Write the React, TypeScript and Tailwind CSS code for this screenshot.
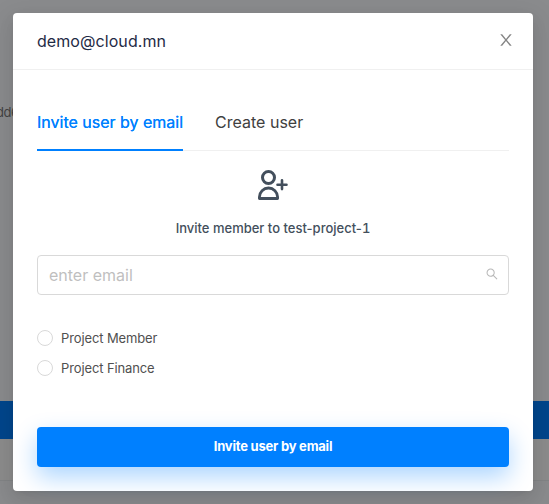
import React from "react";

function UserPlusIcon() {
  return (
    <svg width="32" height="32" viewBox="0 0 32 32" fill="none" stroke="#434f5c" strokeWidth="3" className="block">
      <circle cx="11.5" cy="8.5" r="6" />
      <path d="M2.4 29.5v-1.4a9.1 9.1 0 0 1 18.2 0v1.4Z" strokeWidth="2.8" strokeLinejoin="round" />
      <path d="M25 11.3v8.8M20.5 15.7h9" strokeWidth="2.6" strokeLinecap="round" />
    </svg>
  );
}

function CloseIcon() {
  return (
    <svg width="18" height="18" viewBox="0 0 1024 1024" fill="#858585">
      <path d="M563.8 512l262.5-312.9c4.4-5.2.7-13.1-6.1-13.1h-79.8c-4.7 0-9.2 2.1-12.3 5.7L511.6 449.8 295.1 191.7c-3-3.6-7.5-5.7-12.3-5.7H203c-6.8 0-10.5 7.9-6.1 13.1L459.4 512 196.9 824.9A7.95 7.95 0 0 0 203 838h79.8c4.7 0 9.2-2.1 12.3-5.7l216.5-258.1 216.5 258.1c3 3.6 7.5 5.7 12.3 5.7h79.8c6.8 0 10.5-7.9 6.1-13.1L563.8 512z" />
    </svg>
  );
}

function SearchIcon() {
  return (
    <svg width="14" height="14" viewBox="0 0 1024 1024" fill="#b8b8b8" className="-mt-0.5">
      <path d="M909.6 854.5L649.9 594.8C690.2 542.7 712 479 712 412c0-80.2-31.3-155.4-87.9-212.1-56.6-56.7-132-87.9-212.1-87.9s-155.5 31.3-212.1 87.9C143.2 256.5 112 331.8 112 412c0 80.1 31.3 155.5 87.9 212.1C256.5 680.8 331.8 712 412 712c67 0 130.6-21.8 182.7-62l259.7 259.6a8.2 8.2 0 0 0 11.6 0l43.6-43.5a8.2 8.2 0 0 0 0-11.6zM570.4 570.4C528 612.7 471.8 636 412 636s-116-23.3-158.4-65.6C211.3 528 188 471.8 188 412s23.3-116.1 65.6-158.4C296 211.2 352.2 188 412 188s116.1 23.2 158.4 65.6S636 352.2 636 412s-23.3 116.1-65.6 158.4z" />
    </svg>
  );
}

function RadioOption({ label }: { label: string }) {
  return (
    <label className="flex h-[30px] items-center gap-2 text-[13px] tracking-[-0.12px] text-[#505050]">
      <span className="h-4 w-4 rounded-full border border-[#d9d9d9]" />
      <span className="pt-px">{label}</span>
    </label>
  );
}

export default function App() {
  return (
    <div className="relative h-[504px] w-[549px] overflow-hidden bg-[#8a8b8d] font-['Inter',sans-serif]">
      <div className="flex h-full flex-col">
        <div className="h-[401px] pt-[102px] text-[13px] leading-5 text-[#444444]">
          <span className="-ml-[4px] tracking-[-0.4px]">dd6</span>
        </div>
        <div className="h-[38px] bg-[#00468c]" />
        <div className="h-[42px] border-b border-[#828486] bg-[#8c8c8c]" />
      </div>

      <div className="absolute left-[13px] top-[13px] flex h-[478px] w-[520px] flex-col rounded-[4px] bg-white shadow-[0_3px_6px_-4px_rgba(0,0,0,0.12),0_6px_16px_0_rgba(0,0,0,0.08),0_9px_28px_8px_rgba(0,0,0,0.05)]">
        <header className="flex h-[57px] items-center justify-between border-b border-[#f0f0f0] pl-6 pr-[18px]">
          <h1 className="text-[16px] leading-6 tracking-[0.07px] text-[#1f2b46]">demo@cloud.mn</h1>
          <button aria-label="Close" className="-mt-0.5">
            <CloseIcon />
          </button>
        </header>

        <div className="flex flex-col px-6">
          <nav className="mt-6 flex h-[57px] gap-8 border-b border-[#f0f0f0] text-[16px] leading-6">
            <button className="-mb-px flex items-center whitespace-nowrap border-b-2 border-[#0080ff] text-[#0080ff] [text-shadow:0_0_0.25px_currentColor]">
              Invite user by email
            </button>
            <button className="flex items-center whitespace-nowrap text-[#404040]">Create user</button>
          </nav>

          <div className="flex flex-col items-center pt-[18px]">
            <UserPlusIcon />
            <p className="mt-[17px] text-[13px] font-medium leading-5 text-[#434f5c]">
              Invite member to test-project-<span className="tabular-nums">1</span>
            </p>
          </div>

          <div className="mt-[17px] flex h-10 items-center justify-between rounded-[4px] border border-[#d9d9d9] pl-[11px] pr-[9px]">
            <input
              placeholder="enter email"
              className="min-w-0 flex-1 text-[16px] leading-6 outline-none placeholder:text-[#bfbfbf]"
            />
            <SearchIcon />
          </div>

          <div className="mt-7 flex flex-col">
            <RadioOption label="Project Member" />
            <RadioOption label="Project Finance" />
          </div>

          <button className="mt-11 h-10 rounded-[4px] bg-[#0080ff] text-[13px] font-bold tracking-[-0.22px] text-white shadow-[0_10px_24px_rgba(0,128,255,0.33)]">
            Invite user by email
          </button>
        </div>
      </div>
    </div>
  );
}
